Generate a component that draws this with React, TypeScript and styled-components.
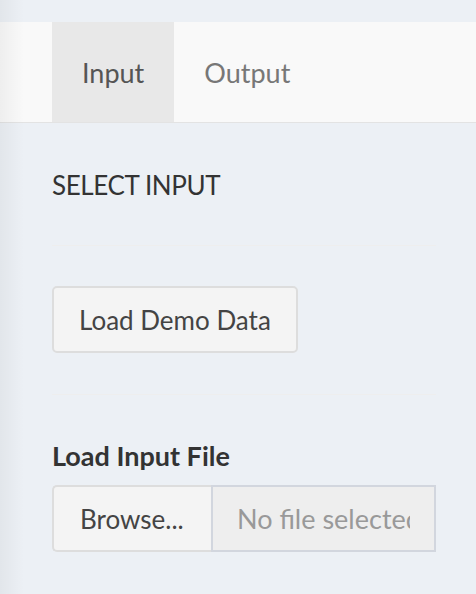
import styled, { createGlobalStyle } from 'styled-components';

const GlobalStyle = createGlobalStyle`
    html, body {
        margin: 0;
        padding: 0;
        background: #ecf0f5;
        font-family: Lato, "Liberation Sans", sans-serif;
    }
`;

const Page = styled.div`
    position: relative;
    min-height: 594px;
    padding-top: 22px;
    box-sizing: border-box;
    overflow: hidden;
`;

// sidebar shadow falling over the left edge
const EdgeShade = styled.div`
    position: absolute;
    top: 0;
    left: 0;
    bottom: 0;
    width: 24px;
    background: linear-gradient(to right, rgba(0, 0, 0, 0.045), rgba(0, 0, 0, 0));
    pointer-events: none;
`;

const TabBar = styled.div`
    display: flex;
    height: 100px;
    padding-left: 52px;
    background: #f9f9f9;
    border-bottom: 1px solid #e3e3e3;
`;

const Tab = styled.div<{ $active?: boolean }>`
    display: flex;
    align-items: center;
    padding: 0 30px;
    font-size: 27px;
    color: ${(p) => (p.$active ? '#555' : '#777')};
    background: ${(p) => (p.$active ? '#e8e8e8' : 'transparent')};
`;

const Content = styled.div`
    padding: 0 40px 0 52px;
`;

const Heading = styled.div`
    margin-top: 46px;
    font-size: 26px;
    letter-spacing: -0.4px;
    line-height: 32px;
    color: #333;
`;

const Divider = styled.hr`
    margin: 0;
    border: 0;
    border-top: 1px solid #eee;
`;

const Button = styled.button`
    display: inline-flex;
    align-items: center;
    height: 67px;
    padding: 0 25px;
    font-family: inherit;
    font-size: 26px;
    color: #444;
    background: #f4f4f4;
    border: 2px solid #ddd;
    border-radius: 5px;
`;

const Label = styled.div`
    font-size: 27px;
    font-weight: 700;
    line-height: 32px;
    color: #333;
`;

const FileRow = styled.div`
    display: flex;
    height: 67px;
`;

const Browse = styled.div`
    display: flex;
    align-items: center;
    box-sizing: border-box;
    width: 159px;
    padding-left: 26px;
    font-size: 26px;
    color: #444;
    background: #f4f4f4;
    border: 2px solid #ddd;
    border-right: 0;
    border-radius: 5px 0 0 5px;
`;

const FileName = styled.div`
    display: flex;
    align-items: center;
    flex: 1;
    min-width: 0;
    box-sizing: border-box;
    padding: 0 24px 0 24px;
    background: #eee;
    border: 2px solid #d2d6de;
`;

const FileText = styled.span`
    overflow: hidden;
    white-space: nowrap;
    font-size: 27px;
    color: #999;
`;

const Section = styled.div<{ $top: number; $bottom: number }>`
    padding-top: ${(p) => p.$top}px;
    padding-bottom: ${(p) => p.$bottom}px;
`;

const App = () => {
    return (
        <Page>
            <GlobalStyle />
            <TabBar>
                <Tab $active>Input</Tab>
                <Tab>Output</Tab>
            </TabBar>
            <Content>
                <Heading>SELECT INPUT</Heading>
                <Section $top={44} $bottom={0}>
                    <Divider />
                </Section>
                <Section $top={40} $bottom={41}>
                    <Button>Load Demo Data</Button>
                </Section>
                <Divider />
                <Section $top={45} $bottom={13}>
                    <Label>Load Input File</Label>
                </Section>
                <FileRow>
                    <Browse>Browse...</Browse>
                    <FileName>
                        <FileText>No file selected</FileText>
                    </FileName>
                </FileRow>
            </Content>
            <EdgeShade />
        </Page>
    );
};

export default App;
